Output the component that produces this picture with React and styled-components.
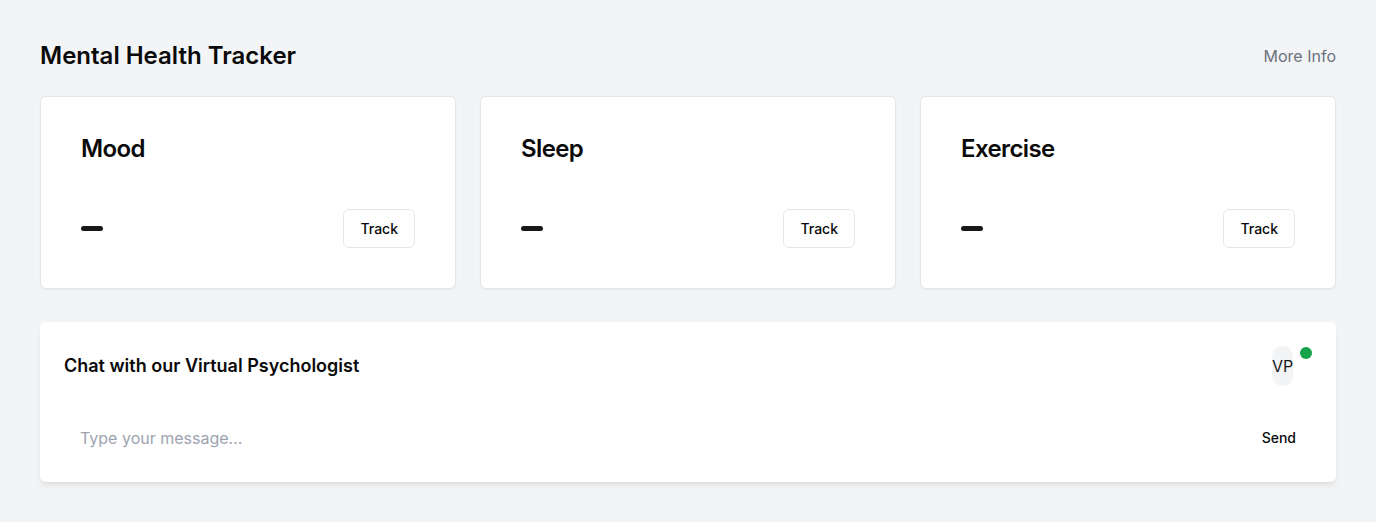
import React from "react";
import styled, { createGlobalStyle } from "styled-components";

const Global = createGlobalStyle`
  html, body { margin: 0; padding: 0; background: #f3f4f6; }
  body { font-family: Inter, "Noto Sans", sans-serif; color: #0a0a0a; }
  * { box-sizing: border-box; }
`;

const Page = styled.div`
  padding: 40px;
  display: flex;
  flex-direction: column;
`;

const Header = styled.header`
  display: flex;
  align-items: center;
  justify-content: space-between;
  height: 32px;
  margin-bottom: 24px;
`;

const Title = styled.h1`
  margin: 0;
  font-size: 24px;
  line-height: 32px;
  font-weight: 600;
  color: #0a0a0a;
`;

const MoreLink = styled.a`
  font-size: 16px;
  line-height: 24px;
  color: #6b7280;
  text-decoration: none;
  cursor: pointer;
`;

const Grid = styled.div`
  display: grid;
  grid-template-columns: repeat(3, 1fr);
  gap: 24px;
  margin-bottom: 33px;
`;

const Card = styled.section`
  background: #fff;
  border: 1px solid #e5e7eb;
  border-radius: 6px;
  box-shadow: 0 1px 2px rgba(0, 0, 0, 0.05);
  padding: 40px;
  display: flex;
  flex-direction: column;
`;

const CardTitle = styled.h2`
  margin: 0 0 48px;
  font-size: 24px;
  line-height: 24px;
  font-weight: 600;
  letter-spacing: -0.6px;
  color: #0a0a0a;
`;

const CardRow = styled.div`
  display: flex;
  align-items: center;
  justify-content: space-between;
`;

const Dash = styled.span`
  display: block;
  width: 22px;
  height: 5px;
  border-radius: 3px;
  background: #171717;
`;

const TrackButton = styled.button`
  font-family: inherit;
  font-size: 14px;
  line-height: 20px;
  font-weight: 500;
  color: #0a0a0a;
  background: #fff;
  border: 1px solid #e5e7eb;
  border-radius: 6px;
  height: 39px;
  padding: 0 16px;
  cursor: pointer;
`;

const ChatCard = styled.section`
  background: #fff;
  border-radius: 6px;
  box-shadow: 0 4px 6px -1px rgba(0, 0, 0, 0.08), 0 2px 4px -2px rgba(0, 0, 0, 0.06);
  padding: 24px;
  display: flex;
  flex-direction: column;
`;

const ChatHeader = styled.div`
  display: flex;
  align-items: center;
  justify-content: space-between;
  height: 40px;
  margin-bottom: 32px;
`;

const ChatTitle = styled.h3`
  margin: 0;
  font-size: 18px;
  line-height: 28px;
  font-weight: 600;
  color: #0a0a0a;
`;

const AvatarWrap = styled.div`
  position: relative;
  display: flex;
  width: 40px;
  height: 40px;
`;

const Avatar = styled.div`
  width: 21px;
  height: 40px;
  border-radius: 999px;
  background: #f3f4f6;
  display: flex;
  align-items: center;
  justify-content: center;
  font-size: 16px;
  line-height: 24px;
  color: #171717;
  white-space: nowrap;
`;

const OnlineDot = styled.span`
  position: absolute;
  top: 1px;
  right: 0;
  width: 12px;
  height: 12px;
  border-radius: 50%;
  background: #16a34a;
`;

const InputRow = styled.form`
  display: flex;
  align-items: center;
  height: 40px;
`;

const MessageInput = styled.input`
  flex: 1;
  height: 40px;
  border: none;
  outline: none;
  background: transparent;
  padding: 8px 16px;
  font-family: inherit;
  font-size: 16px;
  color: #0a0a0a;
  &::placeholder { color: #9ca3af; }
`;

const SendButton = styled.button`
  font-family: inherit;
  font-size: 14px;
  line-height: 20px;
  font-weight: 500;
  color: #0a0a0a;
  background: transparent;
  border: none;
  padding: 10px 16px;
  cursor: pointer;
`;

const metrics = ["Mood", "Sleep", "Exercise"];

export default function App() {
  return (
    <>
      <Global />
      <Page>
        <Header>
          <Title>Mental Health Tracker</Title>
          <MoreLink>More Info</MoreLink>
        </Header>
        <Grid>
          {metrics.map((m) => (
            <Card key={m}>
              <CardTitle>{m}</CardTitle>
              <CardRow>
                <Dash />
                <TrackButton type="button">Track</TrackButton>
              </CardRow>
            </Card>
          ))}
        </Grid>
        <ChatCard>
          <ChatHeader>
            <ChatTitle>Chat with our Virtual Psychologist</ChatTitle>
            <AvatarWrap>
              <Avatar>VP</Avatar>
              <OnlineDot />
            </AvatarWrap>
          </ChatHeader>
          <InputRow onSubmit={(e) => e.preventDefault()}>
            <MessageInput placeholder="Type your message..." />
            <SendButton type="submit">Send</SendButton>
          </InputRow>
        </ChatCard>
      </Page>
    </>
  );
}
